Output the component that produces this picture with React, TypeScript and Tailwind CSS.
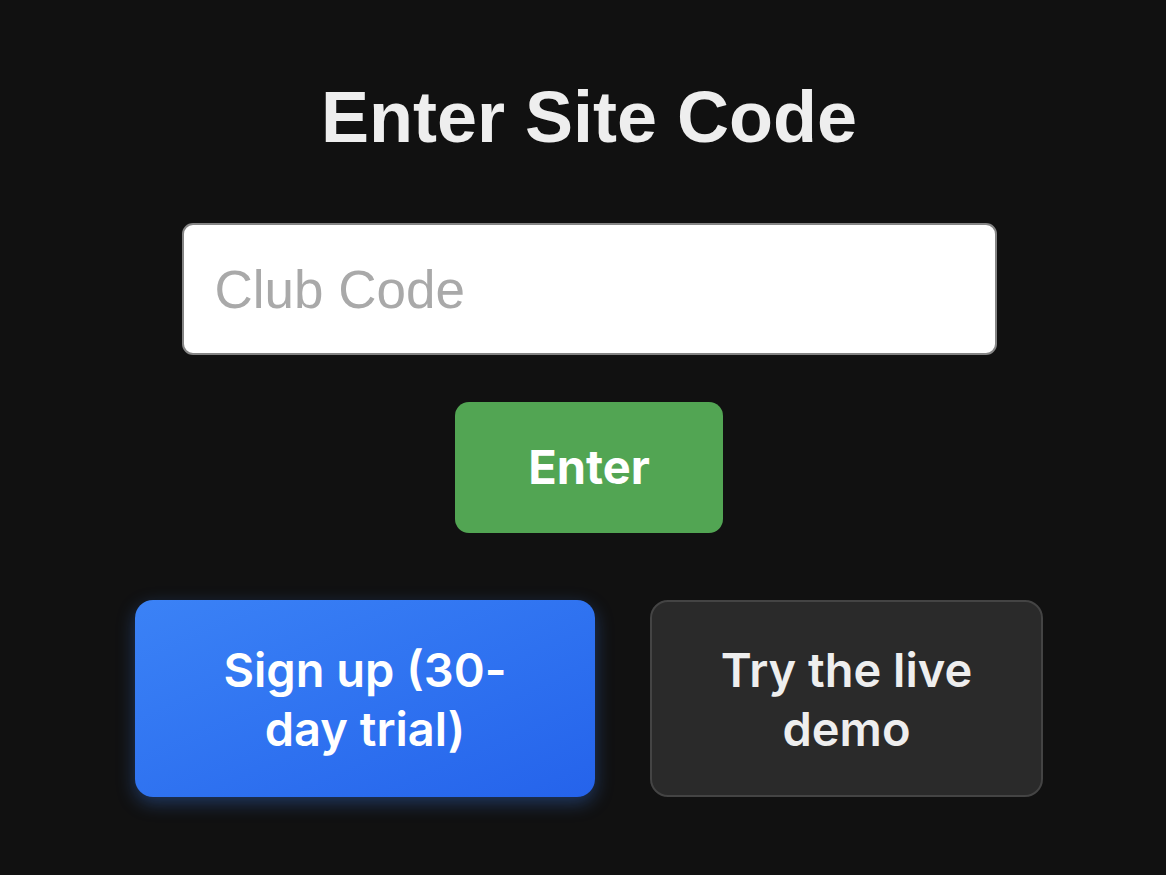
export default function App() {
    return (
        <div className="flex min-h-screen w-full flex-col items-center bg-[#111111] pl-[12px] font-['Inter','Liberation_Sans',sans-serif]">
            <h1 className="mt-[81px] font-['Liberation_Sans',Arial,sans-serif] text-[72px] font-bold leading-[72px] text-[#eeeeee]">
                Enter Site Code
            </h1>

            <input
                type="text"
                placeholder="Club Code"
                className="mt-[70px] h-[132px] w-[815px] rounded-[11px] border-2 border-[#858585] bg-white px-[31px] font-['Liberation_Sans',Arial,sans-serif] text-[53px] text-[#222] outline-none placeholder:text-[#a9a9a9]"
            />

            <button
                type="button"
                className="mt-[47px] h-[131px] w-[268px] rounded-[14px] bg-[#52a553] text-[47px] font-bold text-white"
            >
                Enter
            </button>

            <div className="mt-[67px] flex gap-[55px]">
                <button
                    type="button"
                    className="flex h-[197px] w-[460px] items-center justify-center rounded-[18px] bg-gradient-to-br from-[#3b82f6] to-[#2563eb] px-[60px] text-[47px] leading-[59px] font-semibold text-white shadow-[0_6px_18px_rgba(59,130,246,0.35)]"
                >
                    Sign up (30-day trial)
                </button>
                <button
                    type="button"
                    className="flex h-[197px] w-[393px] items-center justify-center rounded-[18px] border-2 border-[#444444] bg-[#2a2a2a] px-[60px] text-[47px] leading-[59px] font-semibold text-[#eeeeee]"
                >
                    Try the live demo
                </button>
            </div>
        </div>
    );
}
